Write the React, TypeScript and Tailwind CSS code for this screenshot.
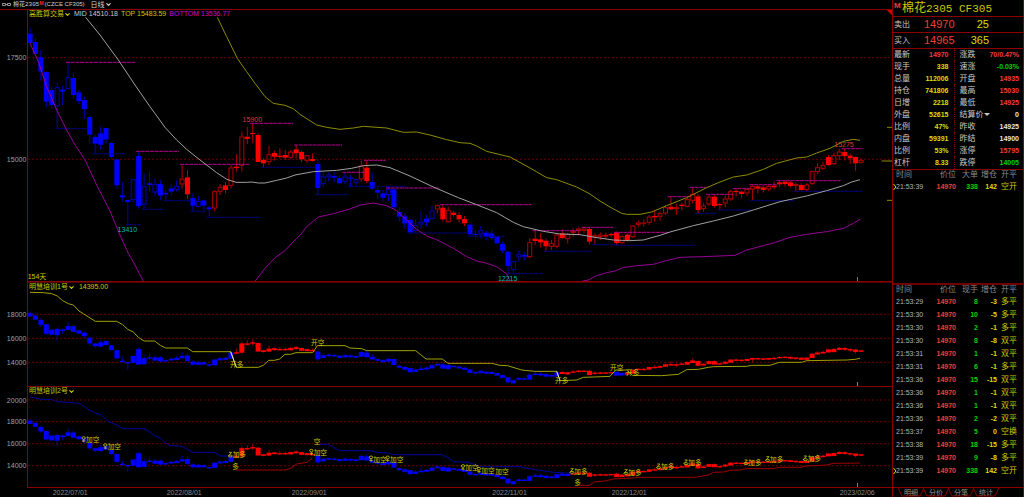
import { ChevronDown } from "lucide-react";
import type { ReactNode } from "react";

type Kind = "B" | "b" | "R" | "r";
type Candle = { high: number; top: number; bottom: number; low: number; kind: Kind };

// Chart units: three per CSS pixel at the default width.
const STEP = 16.295;
const FIRST_X = 90;
const WIDTH = 2676;

// high, top, bottom, low, kind (B/b falling, R/r rising; lower case is hollow)
const SERIES = `
82 101 129 129 B|115 126 162 162 B|150 172 215 242 B|215 216 305 322 B|258 270 315 328 B|246 262 319 386 b|258 269 275 315 B|188 232 267 267 b
218 234 285 293 B|270 277 303 312 B|290 300 327 357 B|348 351 404 433 B|404 411 431 460 B|380 400 434 448 B|384 384 419 430 B|425 429 471 478 B
478 478 556 566 B|546 586 592 605 B|600 600 606 676 B|538 538 600 607 b|453 468 618 626 B|520 559 614 628 b|515 550 555 575 B|535 552 577 588 b
540 552 587 600 B|570 579 583 602 B|553 565 575 588 B|540 558 570 575 b|493 536 553 566 r|510 532 583 597 R|580 594 617 635 B|588 603 620 622 b
598 601 617 630 B|618 622 628 650 B|570 574 625 633 r|552 561 575 585 r|545 556 570 580 R|495 503 557 565 r|462 500 504 515 R|395 410 497 515 r
380 410 417 432 R|370 399 402 430 R|400 405 486 486 R|475 480 490 502 R|437 463 486 495 r|452 459 470 482 R|445 467 471 475 R|450 465 473 480 R
450 455 473 478 r|436 448 460 475 R|452 456 478 485 R|465 466 482 488 r|460 477 483 485 R|480 492 564 585 B|513 530 552 562 b|518 524 532 545 b
515 528 533 548 B|525 534 550 552 B|515 530 545 552 b|525 533 536 560 B|535 538 548 556 b|482 497 538 545 r|482 503 543 550 R|517 546 566 570 B
562 570 578 597 B|570 580 593 605 B|560 568 585 603 b|565 568 622 625 B|620 636 650 665 B|640 649 670 685 B|655 660 697 702 B|657 675 692 700 b
633 666 673 685 b|645 656 667 680 B|618 632 657 660 b|613 616 628 640 r|613 623 658 665 R|620 630 666 668 r|633 638 645 650 R|637 645 658 668 R
648 657 670 678 R|670 674 703 710 B|690 702 705 713 B|678 690 703 715 b|692 698 710 722 B|690 700 714 720 B|708 711 730 733 B|725 732 752 760 B
752 755 798 820 B|782 784 809 820 b|752 763 772 785 b|755 765 770 782 B|715 727 771 775 r|692 716 723 735 R|700 718 727 742 R|715 722 739 755 R
720 730 740 750 r|700 704 740 745 r|688 700 714 717 R|698 702 717 730 r|685 694 698 710 R|683 686 692 705 r|680 686 692 700 r|680 687 725 733 R
700 706 712 733 r|698 704 710 720 r|698 705 710 718 r|698 702 706 712 R|695 698 729 736 R|705 709 729 732 r|700 704 721 725 R|675 677 711 714 r
662 668 674 680 r|658 668 671 680 r|645 650 668 675 r|632 648 652 665 R|635 640 650 662 r|615 622 640 645 r|590 620 628 630 R|612 622 627 645 r
608 614 618 630 R|592 598 620 622 r|562 583 602 610 r|583 589 630 640 R|610 617 627 635 r|585 590 613 618 r|583 590 618 623 R|608 612 616 630 R
587 596 610 622 r|570 574 598 603 r|565 573 576 590 R|572 575 582 593 R|565 567 580 587 r|556 558 568 602 r|555 559 566 580 R|556 562 570 578 R
555 558 568 574 r|545 557 562 568 R|540 547 553 560 R|542 545 552 560 R|543 547 558 562 R|548 553 557 577 R|550 555 570 572 R|550 554 570 573 r
512 514 551 555 r|490 502 516 522 r|485 496 506 510 r|465 471 495 498 R|458 466 492 495 r|447 455 468 480 r|447 456 468 482 R|460 467 475 492 R
470 471 490 513 R|475 480 488 490 r`;

const candles: Candle[] = SERIES.trim()
  .split(/[|\n]/)
  .map((row) => {
    const [high, top, bottom, low, kind] = row.split(" ");
    return { high: +high, top: +top, bottom: +bottom, low: +low, kind: kind as Kind };
  });

const BLUE = "#0000ff";
const RED = "#ff0000";
const FRAME = "#8a0000";
const GRID = "#640000";
const OLIVE = "#8c8c00";
const LABEL = "#c8c800";

const MID =
  "257,52 300,105 355,180 405,255 450,320 495,382 530,420 560,448 600,480 650,518 680,538 708,547 740,547 755,546 775,549 795,549 830,541 860,534 885,525 940,515 1010,511 1055,505 1090,497 1130,495 1170,503 1230,528 1300,561 1375,593 1430,614 1490,638 1540,667 1570,680 1630,694 1680,702 1740,704 1785,712 1840,720 1890,722 1930,720 1980,706 2010,696 2080,677 2140,663 2200,648 2260,630 2340,605 2420,588 2480,572 2530,557 2555,546 2580,539";
const TOP =
  "652,52 680,110 712,175 740,215 765,250 795,290 820,310 855,316 880,326 900,343 950,375 980,382 1020,388 1060,384 1090,379 1160,384 1210,397 1250,396 1290,405 1340,419 1380,428 1410,430 1430,438 1460,454 1530,471 1590,504 1640,533 1670,539 1730,561 1770,582 1800,603 1830,621 1865,640 1880,643 1920,643 1955,636 2000,617 2060,593 2120,563 2160,546 2200,531 2240,525 2290,508 2330,490 2390,474 2420,471 2450,459 2490,445 2530,424 2560,418 2580,421";
const BOTTOMS = [
  "90,130 115,185 140,260 170,330 200,390 224,433 255,480 290,555 330,633 360,705 385,760 405,795 430,844",
  "765,844 795,805 825,773 855,752 880,725 900,706 920,680 955,651 1000,641 1050,627 1080,615 1120,609 1160,617 1190,632 1220,660 1250,688 1280,708 1310,719 1360,745 1400,770 1430,783 1460,790 1490,800 1520,822 1530,844",
  "1745,844 1765,840 1790,827 1820,818 1845,813 1868,803 1910,797 1960,793 1990,784 2040,772 2110,770 2205,766 2240,750 2320,729 2370,712 2420,703 2480,695 2530,685 2560,670 2580,658",
];

const RESISTANCE = [
  [198, 408, 187], [408, 537, 454], [540, 748, 493], [750, 880, 370], [882, 1026, 435], [1027, 1092, 517],
  [1092, 1157, 481], [1158, 1318, 564], [1320, 1595, 614], [1597, 1740, 692], [1745, 1840, 682], [1842, 2005, 697],
  [2003, 2070, 590], [2070, 2118, 562], [2118, 2198, 583], [2198, 2250, 566], [2248, 2330, 554], [2330, 2522, 542],
  [2525, 2588, 446],
];
const SUPPORT = [
  [168, 270, 386], [278, 375, 461], [378, 423, 674], [425, 488, 628], [492, 572, 602], [572, 618, 634],
  [620, 780, 652], [785, 945, 502], [945, 1042, 584], [1043, 1220, 559], [1225, 1405, 699], [1403, 1515, 709],
  [1520, 1628, 821], [1632, 1775, 754], [1775, 1850, 734], [1848, 2085, 736], [2085, 2150, 640], [2153, 2250, 630],
  [2250, 2380, 602], [2380, 2588, 574],
];

const STOP_LINE =
  "90,877 130,878 155,881 172,888 188,902 205,911 220,915 237,933 286,964 350,964 368,974 383,988 400,996 415,1012 432,1023 464,1023 481,1036 497,1044 562,1044 578,1055 692,1055 709,1102 775,1102 790,1096 806,1081 823,1081 839,1077 855,1063 872,1063 888,1058 938,1058 952,1037 1035,1037 1050,1044 1085,1046 1100,1052 1247,1052 1278,1077 1327,1077 1344,1090 1475,1090 1500,1096 1523,1097 1565,1110 1604,1114 1670,1114 1680,1142 1730,1140 1750,1132 1780,1131 1830,1129 1847,1110 1880,1110 1898,1126 1985,1127 2035,1123 2060,1109 2095,1108 2125,1102 2140,1100 2240,1099 2255,1096 2310,1096 2338,1087 2405,1087 2420,1082 2540,1080 2565,1078 2580,1075";

const SHORT_TRACKS = [
  "90,1190 120,1198 155,1198 172,1205 230,1209 245,1214 270,1232 288,1240 300,1243 325,1264 350,1275 368,1286 432,1286 448,1295 464,1307 481,1314 497,1329 510,1336 546,1339 578,1357 644,1357 660,1368 692,1368",
  "955,1333 985,1333 1018,1352 1110,1352 1132,1357 1165,1359 1180,1364 1325,1364 1344,1373 1360,1385 1405,1387 1441,1400 1560,1400 1585,1406 1660,1417 1720,1420",
];
const LONG_TRACKS = [
  "709,1410 855,1410 872,1405 890,1392 920,1387 937,1375",
  "1735,1456 1767,1456 1783,1446 1815,1443 1840,1437 1898,1434 1915,1432 2085,1432 2125,1425 2140,1417 2170,1416 2190,1411 2220,1410 2240,1406 2320,1406 2338,1402 2400,1402 2420,1398 2480,1395 2500,1390 2580,1389",
];

type Sign = "short" | "long";
type Mark = [x: number, y: number, text: string, sign?: Sign];
const MARKS_1: Mark[] = [
  [690, 1093, "开多"], [933, 1027, "开空"], [1665, 1142, "开多"], [1830, 1101, "开空"], [1878, 1117, "开多"],
];
const MARKS_2: Mark[] = [
  [243, 1319, "加空", "short"], [308, 1340, "加空", "short"], [683, 1364, "加多", "long"], [697, 1400, "多"],
  [941, 1324, "空"], [926, 1357, "加空", "short"], [1105, 1377, "加空", "short"], [1155, 1377, "加空", "short"],
  [1381, 1403, "加空", "short"], [1429, 1411, "加空", "short"], [1486, 1415, "加空"], [1708, 1413, "加多", "long"],
  [1723, 1446, "多"], [1870, 1416, "加多", "long"], [1968, 1399, "加多", "long"], [2050, 1387, "加多", "long"],
  [2230, 1387, "加多", "long"], [2295, 1377, "加多", "long"], [2408, 1375, "加多", "long"],
];

function Panel({ y, height, label, children }: { y: number; height: number; label: string; children: ReactNode }) {
  return (
    <svg
      role="img"
      aria-label={label}
      viewBox={`0 ${y} ${WIDTH} ${height}`}
      className="block h-auto w-full font-['Liberation_Sans','Noto_Sans_CJK_SC',sans-serif]"
    >
      {children}
    </svg>
  );
}

function AxisRow({ y, value }: { y: number; value: string }) {
  return (
    <g>
      <line x1={84} x2={2676} y1={y} y2={y} stroke={GRID} strokeWidth={3} strokeDasharray="6 6" />
      <text x={79} y={y + 8} fontSize={21} textAnchor="end" fill="#a0a0a0">{value}</text>
    </g>
  );
}

function Line({ points, color }: { points: string; color: string }) {
  return <polyline points={points} fill="none" stroke={color} strokeWidth={3} strokeLinejoin="round" />;
}

function Candles() {
  return (
    <g>
      {candles.map((c, i) => {
        const x = FIRST_X + i * STEP;
        const falling = c.kind === "B" || c.kind === "b";
        const solid = c.kind === "B" || c.kind === "R";
        const edge = falling ? "#0000b4" : "#b40000";
        const fill = falling ? BLUE : RED;
        return (
          <g key={i}>
            <line x1={x} x2={x} y1={c.high} y2={c.top} stroke={edge} strokeWidth={3} />
            <line x1={x} x2={x} y1={c.bottom} y2={c.low} stroke={edge} strokeWidth={3} />
            {solid ? (
              <rect x={x - 7.5} y={c.top} width={15} height={Math.max(3, c.bottom - c.top)} fill={fill} />
            ) : (
              <rect x={x - 6} y={c.top + 1} width={12} height={c.bottom - c.top - 2} fill="none" stroke={edge} strokeWidth={3} />
            )}
          </g>
        );
      })}
    </g>
  );
}

function MiniCandles({ base, ratio, isShort }: { base: number; ratio: number; isShort: (i: number) => boolean }) {
  const at = (y: number) => base + (y - 480) * ratio;
  return (
    <g>
      {candles.map((c, i) => {
        const x = FIRST_X + i * STEP;
        const color = isShort(i) ? BLUE : RED;
        return (
          <g key={i}>
            <line x1={x} x2={x} y1={at(c.high)} y2={at(c.low)} stroke={color} strokeWidth={2} />
            <rect x={x - 7.5} y={at(c.top)} width={15} height={Math.max(4, at(c.bottom) - at(c.top) + 2)} fill={color} />
          </g>
        );
      })}
    </g>
  );
}

function SignIcon({ x, y, sign }: { x: number; y: number; sign: Sign }) {
  const d =
    sign === "short"
      ? `M${x + 3} ${y - 5}a5 4 0 1 0 10 0a5 4 0 1 0 -10 0M${x + 8} ${y}V${y + 8}M${x + 3} ${y + 4}H${x + 13}`
      : `M${x + 4} ${y - 7}H${x + 12}L${x + 2} ${y + 4}M${x + 2} ${y + 4}a6 3 0 1 0 12 0a6 3 0 1 0 -12 0`;
  return <path d={d} fill="none" stroke={LABEL} strokeWidth={2.5} />;
}

function Marks({ items }: { items: Mark[] }) {
  return (
    <g fill={LABEL} fontSize={20}>
      {items.map(([x, y, text, sign]) => (
        <g key={`${x}-${y}`}>
          {sign && <SignIcon x={x} y={y} sign={sign} />}
          <text x={sign ? x + 15 : x} y={y + 8}>{text}</text>
        </g>
      ))}
    </g>
  );
}

function Frame({ top, bottom }: { top: number; bottom: number }) {
  return (
    <g stroke={FRAME} strokeWidth={3}>
      <line x1={82.5} x2={82.5} y1={top} y2={bottom} />
      <line x1={82.5} x2={WIDTH} y1={bottom - 1.5} y2={bottom - 1.5} />
      <line x1={2572.5} x2={2572.5} y1={bottom - 15} y2={bottom - 3} stroke="#808080" />
    </g>
  );
}

function PanelTitle({ name, children }: { name: string; children?: ReactNode }) {
  return (
    <div className="absolute top-0 left-[29px] flex h-[10px] items-center text-[7px] leading-[10px] whitespace-nowrap text-[#c8c800]">
      <button className="flex items-center" type="button">
        {name}
        <ChevronDown size={7} strokeWidth={4} />
      </button>
      {children}
    </div>
  );
}

const DATES: [number, string][] = [
  [158, "2022/07/01"], [500, "2022/08/01"], [875, "2022/09/01"], [1477, "2022/11/01"], [1835, "2022/12/01"], [2519, "2023/02/06"],
];

const red = "text-[#f03c3c]";
const yellow = "text-[#dcdc00]";
const green = "text-[#00d200]";
const white = "text-[#e6e6e6]";

const QUOTES: [string, string, string, string, string, string][] = [
  ["最新", "14970", red, "涨跌", "70/0.47%", red],
  ["现手", "338", yellow, "速涨", "-0.03%", green],
  ["总量", "112006", yellow, "开盘", "14935", red],
  ["持仓", "741806", yellow, "最高", "15030", red],
  ["日增", "2218", yellow, "最低", "14925", red],
  ["外盘", "52615", yellow, "结算价", "0", white],
  ["比例", "47%", yellow, "昨收", "14925", white],
  ["内盘", "59391", yellow, "昨结", "14900", white],
  ["比例", "53%", yellow, "涨停", "15795", red],
  ["杠杆", "8.33", yellow, "跌停", "14005", green],
];

type Trade = [time: string, qty: string, delta: string, side: string];
const BIG: Trade[] = [["21:53:39", "338", "142", "空开"]];
const TRADES: Trade[] = [
  ["21:53:29", "8", "-3", "多平"],
  ["21:53:30", "10", "-5", "多平"],
  ["21:53:30", "2", "-1", "多平"],
  ["21:53:30", "8", "-8", "双平"],
  ["21:53:31", "1", "-1", "双平"],
  ["21:53:31", "6", "-1", "多平"],
  ["21:53:36", "15", "-15", "双平"],
  ["21:53:36", "1", "-1", "双平"],
  ["21:53:36", "1", "-1", "双平"],
  ["21:53:36", "2", "-2", "双平"],
  ["21:53:37", "5", "0", "空换"],
  ["21:53:38", "18", "-15", "多平"],
  ["21:53:39", "9", "-8", "多平"],
  ["21:53:39", "338", "142", "空开"],
];

function Tape({ qtyTitle, rows }: { qtyTitle: string; rows: Trade[] }) {
  return (
    <table className="w-full table-fixed border-collapse">
      <colgroup>
        <col className="w-[34px]" />
        <col className="w-[29px]" />
        <col className="w-[22px]" />
        <col className="w-[19px]" />
        <col />
      </colgroup>
      <thead>
        <tr className="h-[10px] text-[8px] leading-[10px] text-[#8c8c8c]">
          <th className="p-0 pl-[3px] text-left font-normal">时间</th>
          <th className="p-0 text-right font-normal">价位</th>
          <th className="p-0 text-right font-normal">{qtyTitle}</th>
          <th className="p-0 text-right font-normal">增仓</th>
          <th className="p-0 pl-1 text-left font-normal">开平</th>
        </tr>
      </thead>
      <tbody>
        {rows.map(([time, qty, delta, side], i) => (
          <tr key={i} className="h-[13px] text-[7px] leading-[11px] font-bold">
            <td className="relative p-0 pl-[3px] font-normal text-[#b4b4b4]">
              {i === rows.length - 1 && (
                <svg viewBox="0 0 4 8" className="absolute top-[3px] left-0 h-2 w-[4px]" aria-hidden="true">
                  <path d="M.5 1 3 4 .5 7" fill="none" stroke="#dcdc00" />
                </svg>
              )}
              {time}
            </td>
            <td className="p-0 text-right text-[#f03c3c]">14970</td>
            <td className="p-0 text-right text-[#00d200]">{qty}</td>
            <td className="p-0 text-right text-[#dcdc00]">{delta}</td>
            <td className="p-0 pl-1 text-[8px] font-normal text-[#c8c800]">{side}</td>
          </tr>
        ))}
      </tbody>
    </table>
  );
}

function Charts() {
  return (
    <main className="min-w-0 flex-1">
      <header className="flex h-[9px] items-center pl-[2px] text-[7px] leading-[9px] whitespace-nowrap text-[#d2d2d2]">
        <svg viewBox="0 0 9 5" className="mr-[2px] h-[5px] w-[9px]" aria-hidden="true">
          <path d="M.5 1.5h3v2h-3zM5.5 1.5h3v2h-3zM3.5 2.5h2" fill="none" stroke="#b4b4b4" strokeWidth=".8" />
        </svg>
        <h1 className="flex items-center text-[6px]">
          <span className="font-['Liberation_Mono','Noto_Sans_CJK_SC',monospace]">棉花2305</span>
          <span className="self-start text-[5px] leading-[6px] font-bold text-[#ff2828]">M</span>
          <span className="ml-[1px]">(CZCE CF305)</span>
        </h1>
        <button type="button" className="ml-[6px] flex items-center">
          日线
          <ChevronDown size={7} strokeWidth={4} />
        </button>
      </header>

      <section className="relative">
        <Panel y={27} height={819} label="高胜算交易 日线">
          <AxisRow y={173} value="17500" />
          <AxisRow y={478} value="15000" />
          <Candles />
          {RESISTANCE.map(([a, b, y]) => (
            <line key={a} x1={a} x2={b} y1={y} y2={y} stroke="#b4008c" strokeWidth={3} strokeDasharray="12 2" />
          ))}
          {SUPPORT.map(([a, b, y]) => (
            <line key={a} x1={a} x2={b} y1={y} y2={y} stroke="#00008c" strokeWidth={3} strokeDasharray="9 2" />
          ))}
          <Line points={MID} color="#a0a0a0" />
          <Line points={TOP} color={OLIVE} />
          {BOTTOMS.map((points) => (
            <Line key={points} points={points} color="#960096" />
          ))}
          <g fontSize={21} textAnchor="middle">
            <text x={757} y={365} fill="#dc3c3c">15900</text>
            <text x={2532} y={440} fill="#dc3c3c">15275</text>
            <text x={382} y={696} fill="#00b4b4">13410</text>
            <text x={1523} y={842} fill="#00b4b4">12215</text>
          </g>
          <text x={83} y={838} fontSize={21} fill={LABEL}>154天</text>
          <g stroke={OLIVE} strokeWidth={3}>
            <line x1={2661} x2={2676} y1={382} y2={382} />
            <line x1={2645} x2={2676} y1={483} y2={483} />
            <line x1={2661} x2={2676} y1={601} y2={601} />
          </g>
          <line x1={0} x2={WIDTH} y1={28.5} y2={28.5} stroke={FRAME} strokeWidth={3} />
          <path d="M2660 30H2676V46Z" fill="#d20000" />
          <Frame top={28} bottom={846} />
        </Panel>
        <PanelTitle name="高胜算交易">
          <span className="ml-[3px] text-[#c8c8c8]">MID 14510.18</span>
          <span className="ml-[3px]">TOP 15483.59</span>
          <span className="ml-[3px] text-[#d200d2]">BOTTOM 13536.77</span>
        </PanelTitle>
      </section>

      <section className="relative">
        <Panel y={846} height={312} label="明慧培训1号">
          <line x1={82} x2={WIDTH} y1={847.5} y2={847.5} stroke="#500000" strokeWidth={3} />
          <AxisRow y={943} value="18000" />
          <AxisRow y={1015} value="16000" />
          <AxisRow y={1087} value="14000" />
          <MiniCandles
            base={1051}
            ratio={0.2953}
            isShort={(i) => i < 38 || (i > 52 && i < 98) || (i > 107 && i < 110)}
          />
          <Line points={STOP_LINE} color="#a0a000" />
          <Line points="692,1055 709,1102" color="#dcdcdc" />
          <Line points="1670,1114 1680,1142" color="#dcdcdc" />
          <Marks items={MARKS_1} />
          <Frame top={846} bottom={1161} />
        </Panel>
        <PanelTitle name="明慧培训1号">
          <span className="ml-[4px]">14395.00</span>
        </PanelTitle>
      </section>

      <section className="relative">
        <Panel y={1158} height={333} label="明慧培训2号">
          <AxisRow y={1200} value="20000" />
          <AxisRow y={1265} value="18000" />
          <AxisRow y={1331} value="16000" />
          <AxisRow y={1397} value="14000" />
          <MiniCandles base={1363} ratio={0.2664} isShort={(i) => i < 38 || (i > 52 && i < 100)} />
          {SHORT_TRACKS.map((points) => (
            <Line key={points} points={points} color="#0000a0" />
          ))}
          {LONG_TRACKS.map((points) => (
            <Line key={points} points={points} color="#a00000" />
          ))}
          <Marks items={MARKS_2} />
          <line x1={82} x2={WIDTH} y1={1159.5} y2={1159.5} stroke={FRAME} strokeWidth={3} />
          <Frame top={1158} bottom={1464} />
          <g fontSize={21} fill="#8c8c8c">
            {DATES.map(([x, text]) => (
              <text key={text} x={x} y={1486}>{text}</text>
            ))}
          </g>
        </Panel>
        <PanelTitle name="明慧培训2号" />
      </section>
    </main>
  );
}

function Sidebar() {
  return (
    <aside className="flex w-[132px] shrink-0 flex-col border-x border-[#8a0000]">
      <h2 className="flex h-4 items-start whitespace-nowrap text-[#c8c800]">
        <span className="w-[9px] pl-px text-[8px] leading-3 font-bold text-[#f03c3c]">M</span>
        <span className="flex items-center pt-[3px] font-['Liberation_Mono','Noto_Sans_CJK_SC',monospace] text-[11px] leading-3">
          <span className="text-[12px]">棉花</span>
          <span>2305 CF305</span>
        </span>
      </h2>
      {[
        ["卖出", "14970", "25"],
        ["买入", "14965", "365"],
      ].map(([label, price, volume]) => (
        <div key={label} className="flex h-4 items-center border-t border-[#8a0000] text-[11px] leading-[15px]">
          <span className="w-[31px] pl-px text-[8px] text-[#c8c8c8]">{label}</span>
          <span className="w-[30px] text-[#f03c3c]">{price}</span>
          <span className="w-[35px] text-right text-[#dcdc00]">{volume}</span>
        </div>
      ))}
      <table className="w-full table-fixed border-collapse border-t border-[#8a0000]">
        <colgroup>
          <col className="w-[22px]" />
          <col className="w-[39px]" />
          <col className="w-[34px]" />
          <col />
        </colgroup>
        <tbody>
          {QUOTES.map(([a, av, ac, b, bv, bc], i) => (
            <tr key={i} className="h-3 text-[7px] leading-[11px]">
              <th className="p-0 pl-px text-left text-[8px] font-normal whitespace-nowrap text-[#c8c8c8]">{a}</th>
              <td className={`border-r border-dotted border-[#780000] p-0 pr-[5px] text-right font-bold ${ac}`}>{av}</td>
              <th className="p-0 pl-[5px] text-left text-[8px] font-normal whitespace-nowrap text-[#c8c8c8]">
                {b}
                {b === "结算价" && (
                  <span className="inline-block border-x-[3px] border-t-[3px] border-x-transparent border-t-[#c8c8c8] align-middle" />
                )}
              </th>
              <td className={`p-0 pr-1 text-right font-bold ${bc}`}>{bv}</td>
            </tr>
          ))}
        </tbody>
      </table>
      <div className="h-[114px] border-t border-[#8a0000]">
        <Tape qtyTitle="大单" rows={BIG} />
      </div>
      <div className="flex-1 border-t-2 border-[#6e0000]">
        <Tape qtyTitle="现手" rows={TRADES} />
      </div>
      <nav className="flex h-[10px] border-t border-[#8a0000] pl-[5px]" role="tablist">
        {["明细", "分价", "分笔", "统计"].map((tab, i) => (
          <button
            key={tab}
            type="button"
            role="tab"
            aria-selected={i === 0}
            className="relative h-[9px] w-[25px] pl-px text-center text-[7px] leading-[8px] text-[#969696]"
          >
            <svg viewBox="0 0 26 9" className="absolute top-0 left-0 h-[9px] w-[26px]" aria-hidden="true">
              <path d="M0 0 4 8H22L26 0" fill="none" stroke="#8a0000" />
            </svg>
            {tab}
          </button>
        ))}
      </nav>
    </aside>
  );
}

export default function App() {
  return (
    <div className="flex min-h-screen items-stretch overflow-hidden bg-black font-['Liberation_Sans','Noto_Sans_CJK_SC',sans-serif]">
      <Charts />
      <Sidebar />
    </div>
  );
}
